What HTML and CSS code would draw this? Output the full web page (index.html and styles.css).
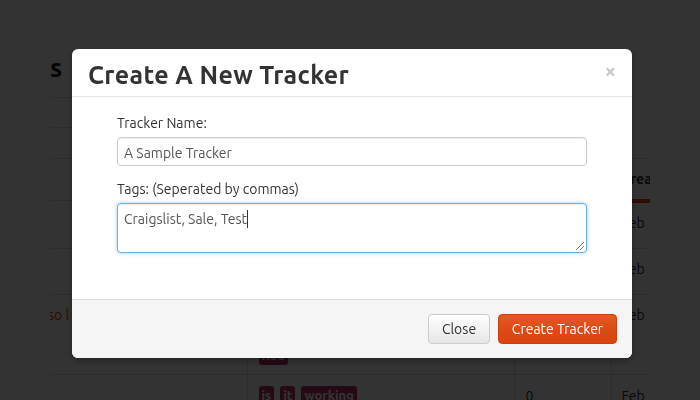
FILE: index.html
```html
<!DOCTYPE html>
<html>
<head>
<meta charset="utf-8">
<title>Create A New Tracker</title>
<link rel="stylesheet" href="styles.css">
</head>
<body>
<div class="page">
  <div class="side-head">s</div>
  <div class="side-row"></div>
  <div class="side-row last"></div>
  <table class="trackers">
    <tr class="head-row">
      <th class="c1"></th>
      <th class="c2"></th>
      <th class="c3"></th>
      <th class="c4 sorted">Created</th>
    </tr>
    <tr class="r1">
      <td class="c1"></td><td class="c2"></td><td class="c3"></td><td class="c4">Feb 14</td>
    </tr>
    <tr class="r2">
      <td class="c1"></td><td class="c2"></td><td class="c3"></td><td class="c4">Feb 14</td>
    </tr>
    <tr class="r3">
      <td class="c1"><span class="link">so l</span></td>
      <td class="c2">
        <div class="tag-lines">
          <div class="tags"><span class="tag">one</span><span class="tag">two</span></div>
          <div class="tags"><span class="tag">Red</span></div>
        </div>
      </td>
      <td class="c3"></td><td class="c4">Feb 14</td>
    </tr>
    <tr class="r4">
      <td class="c1"></td>
      <td class="c2"><div class="tags"><span class="tag">is</span><span class="tag">it</span><span class="tag">working</span></div></td>
      <td class="c3">0</td><td class="c4">Feb 14</td>
    </tr>
  </table>
</div>
<div class="backdrop"></div>
<div class="modal">
  <div class="modal-header">
    <h3 class="modal-title">Create A New Tracker</h3>
    <span class="close">&times;</span>
  </div>
  <div class="modal-body">
    <label class="field-label">Tracker Name:</label>
    <input class="field" type="text" value="A Sample Tracker">
    <label class="field-label">Tags: (Seperated by commas)</label>
    <div class="field area">Craigslist, Sale, Test<span class="caret"></span><span class="grip"></span></div>
  </div>
  <div class="modal-footer">
    <button class="btn btn-default">Close</button>
    <button class="btn btn-primary">Create Tracker</button>
  </div>
</div>
</body>
</html>
```
FILE: styles.css
```css
html, body {
  margin: 0;
  padding: 0;
  height: 100%;
  overflow: hidden;
}
body {
  background: #fff;
  color: #333;
  font-family: Ubuntu, Lato, "Open Sans", "DejaVu Sans", sans-serif;
  font-size: 14px;
}
.page {
  margin-left: 50px;
  width: 600px;
  overflow: hidden;
  padding-top: 50px;
}
.side-head {
  width: 197px;
  height: 48px;
  box-sizing: border-box;
  border-bottom: 1px solid #ddd;
  font-size: 26px;
  font-weight: bold;
  line-height: 36px;
  color: #111;
}
.side-row {
  width: 197px;
  height: 30px;
  border-bottom: 1px solid #ddd;
  box-sizing: border-box;
}
.side-row.last {
  border-bottom: none;
}
.trackers {
  border-collapse: collapse;
  width: 640px;
  table-layout: fixed;
  border-top: 1px solid #ddd;
}
.trackers th, .trackers td {
  box-sizing: border-box;
  padding: 10px 8px 0 11px;
  vertical-align: top;
  line-height: 20px;
  text-align: left;
  border-bottom: 1px solid #ddd;
  overflow: hidden;
  white-space: nowrap;
}
.trackers .c1 { width: 197px; padding-left: 0; }
.trackers .c2 { width: 267px; border-left: 1px solid #ddd; }
.trackers .c3 { width: 97px; border-left: 1px solid #ddd; }
.trackers .c4 { width: 79px; border-left: 1px solid #ddd; padding-left: 10px; }
.head-row th { height: 42px; font-weight: bold; }
.head-row th.sorted { border-bottom: 4px solid #dd4814; }
.r1 td { height: 48px; }
.r2 td { height: 46px; }
.r3 td { height: 80px; }
.r4 td { height: 60px; padding-top: 11px; }
.link { color: #dd4814; margin-left: -2px; }
.tag-lines {
  display: flex;
  flex-direction: column;
  gap: 4px;
  padding-top: 18px;
}
.tags { display: flex; gap: 6px; }
.tag {
  background: #b8336e;
  color: #fff;
  font-weight: bold;
  padding: 0 3px;
  border-radius: 3px;
  line-height: 19px;
  font-size: 13px;
}

.backdrop {
  position: fixed;
  inset: 0;
  background: rgba(0, 0, 0, 0.8);
}
.modal {
  position: fixed;
  top: 49px;
  left: 72px;
  width: 560px;
  background: #fff;
  border-radius: 6px;
  box-shadow: 0 3px 7px rgba(0, 0, 0, 0.3);
  overflow: hidden;
}
.modal-header {
  height: 48px;
  box-sizing: border-box;
  border-bottom: 1px solid #e5e5e5;
  padding: 0 16px;
  display: flex;
  align-items: center;
  justify-content: space-between;
}
.modal-title {
  margin: 0;
  font-size: 25px;
  letter-spacing: 0.35px;
  font-weight: bold;
  color: #333;
  line-height: 28px;
  padding-top: 4px;
}
.close {
  font-size: 20px;
  font-weight: bold;
  color: #c8c8c8;
  line-height: 20px;
  margin-top: -4px;
}
.modal-body {
  padding: 16px 45px 46px;
  display: flex;
  flex-direction: column;
}
.field-label {
  display: block;
  line-height: 20px;
  margin-bottom: 4px;
  color: #333;
}
.field {
  box-sizing: border-box;
  width: 470px;
  height: 29px;
  margin: 0 0 13px;
  padding: 5px 6px 3px;
  border: 1px solid #ccc;
  border-radius: 4px;
  font: inherit;
  color: #555;
  background: #fff;
  outline: none;
  box-shadow: inset 0 1px 1px rgba(0,0,0,0.075);
}
.field.area {
  position: relative;
  height: 50px;
  margin: 0;
  line-height: 20px;
  padding: 5px 6px 3px;
  border-color: #66afe9;
  box-shadow: inset 0 1px 1px rgba(0,0,0,0.075), 0 0 4px rgba(102,175,233,0.6);
}
.caret {
  display: inline-block;
  width: 1px;
  height: 18px;
  background: #333;
  vertical-align: -4px;
}
.grip {
  position: absolute;
  right: 2px;
  bottom: 2px;
  width: 8px;
  height: 8px;
  background: linear-gradient(135deg, transparent 45%, #777 45%, #777 52%, transparent 52%, transparent 70%, #777 70%, #777 77%, transparent 77%);
}
.modal-footer {
  background: #f5f5f5;
  border-top: 1px solid #ddd;
  padding: 14px 15px 14px;
  display: flex;
  justify-content: flex-end;
  gap: 8px;
}
.btn {
  height: 30px;
  box-sizing: border-box;
  border-radius: 4px;
  font: inherit;
  font-size: 14px;
  padding: 0;
  white-space: nowrap;
  cursor: pointer;
}
.btn-default {
  color: #333;
  background: linear-gradient(#fff, #e6e6e6);
  border: 1px solid #ccc;
  width: 62px;
}
.btn-primary {
  color: #fff;
  background: linear-gradient(#e45a22, #dd4814 60%, #d9440f);
  border: 1px solid #c9410f;
  width: 119px;
}
```
